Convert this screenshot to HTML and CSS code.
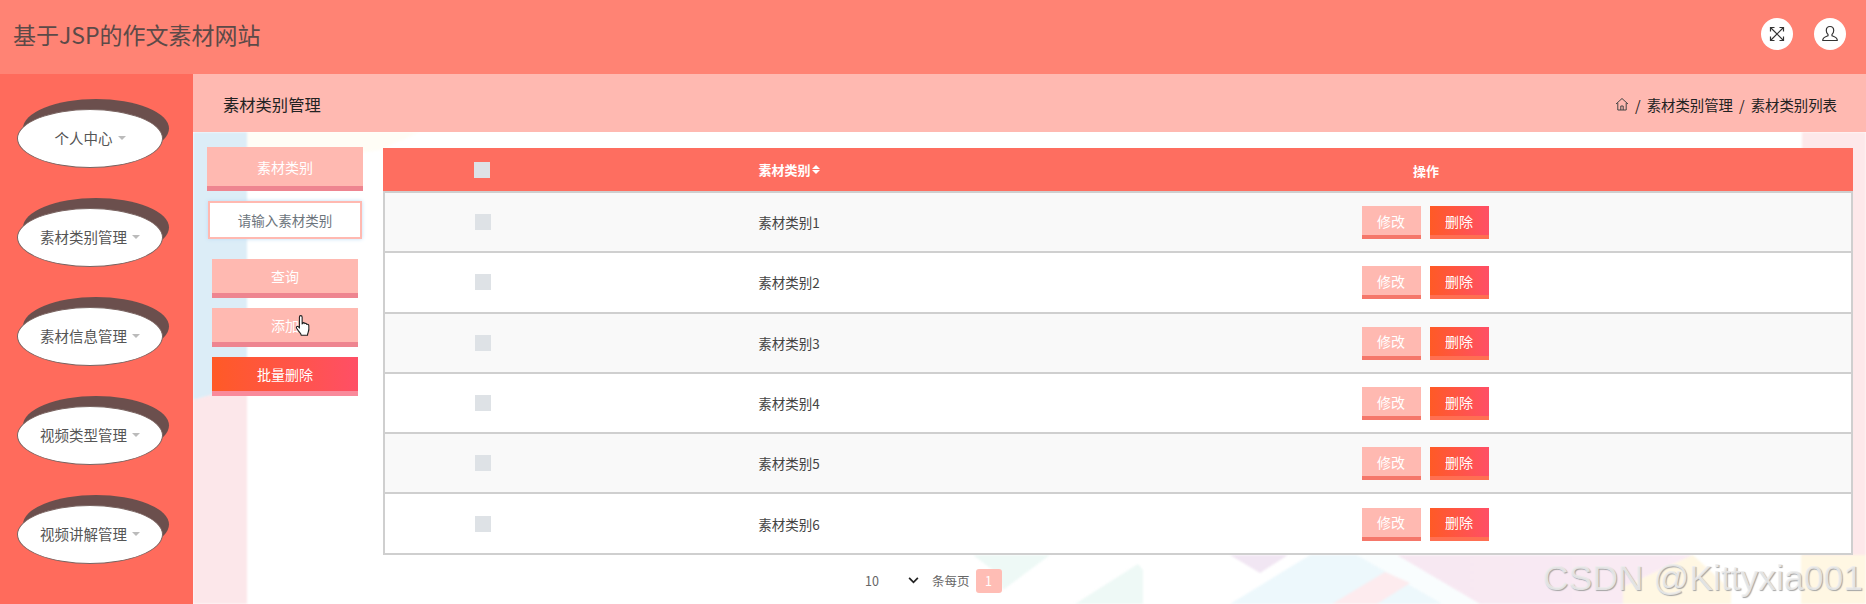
FILE: index.html
```html
<!DOCTYPE html>
<html lang="zh-CN">
<head>
    <meta charset="UTF-8">
    <title>基于JSP的作文素材网站</title>
    <link rel="stylesheet" href="styles.css">
</head>
<body>
    <header class="topbar">
        <div class="site-title">基于JSP的作文素材网站</div>
        <div class="top-icons">
            <span class="round-icon">
                <svg viewBox="0 0 18 18" width="18" height="18" fill="none" stroke="#333" stroke-width="1.2">
                    <path d="M3 3l12 12M15 3L3 15"/>
                    <path d="M2.500 6.500v-4h4M11.500 2.500h4v4M15.500 11.500v4h-4M6.500 15.500h-4v-4"/>
                </svg>
            </span>
            <span class="round-icon">
                <svg viewBox="0 0 18 18" width="18" height="18" fill="none" stroke="#333" stroke-width="1.2">
                    <path d="M9 1.500c-2.400 0-3.700 1.800-3.700 4 0 1.700.7 3 1.700 3.900v1.400c-2 .8-5.200 1.800-5.200 4v.7h14.400v-.7c0-2.200-3.200-3.200-5.200-4V9.400c1-.9 1.700-2.200 1.700-3.900 0-2.200-1.300-4-3.700-4z"/>
                </svg>
            </span>
        </div>
    </header>

    <div class="main">
        <nav class="sidebar">
            <div class="menu-item"><span>个人中心</span><i class="caret"></i></div>
            <div class="menu-item"><span>素材类别管理</span><i class="caret"></i></div>
            <div class="menu-item"><span>素材信息管理</span><i class="caret"></i></div>
            <div class="menu-item"><span>视频类型管理</span><i class="caret"></i></div>
            <div class="menu-item"><span>视频讲解管理</span><i class="caret"></i></div>
        </nav>

        <div class="content">
            <div class="crumb-bar">
                <div class="crumb-title">素材类别管理</div>
                <div class="crumbs">
                    <svg viewBox="0 0 14 14" width="14" height="14" fill="none" stroke="#444" stroke-width="1">
                        <path d="M1 7l6-5.500L13 7M2.800 6v7h8.400V6M5.800 13V9h2.400v4"/>
                    </svg>
                    <span class="sep">/</span>
                    <span>素材类别管理</span>
                    <span class="sep">/</span>
                    <span>素材类别列表</span>
                </div>
            </div>

            <div class="page">
                <!-- page wallpaper, coordinates are window pixels -->
                <svg class="wallpaper" viewBox="193 132 1673 472" width="1673" height="472">
                    <defs>
                        <linearGradient id="lilacFade" x1="0" y1="0" x2="1" y2="0">
                            <stop offset="0" stop-color="#f7e8f2"/>
                            <stop offset="1" stop-color="#faebf4"/>
                        </linearGradient>
                    </defs>
                    <polygon points="247,132 420,132 380,150 247,170" fill="#fffdf6"/>
                    <polygon points="193,132 247,132 247,385 193,400" fill="#dcedf7"/>
                    <polygon points="193,400 247,385 247,604 193,604" fill="#fce7ea"/>
                    <polygon points="1802,132 1866,132 1866,556 1802,556" fill="#fde8ea"/>
                    <polygon points="973,555 1050,555 1003,590 998,574" fill="#eef9f6"/>
                    <polygon points="1138,564 1143,570 1143,604 1075,604" fill="#eef9f6"/>
                    <polygon points="1230,555 1288,555 1260,573" fill="#f1e6f3"/>
                    <polygon points="1310,555 1357,555 1443,604 1230,604" fill="#edf8fc"/>
                    <polygon points="1357,555 1397,555 1480,604 1443,604" fill="#f9fdfe"/>
                    <polygon points="1385,572 1410,583 1377,604 1332,604" fill="#fdebee"/>
                    <polygon points="1397,555 1693,555 1623,587 1623,604 1480,604" fill="url(#lilacFade)"/>
                    <polygon points="1693,555 1731,590 1731,604 1623,604 1623,587" fill="#fff7e3"/>
                    <polygon points="1801,555 1866,555 1866,604 1801,604" fill="#fff7e3"/>
                </svg>

                <div class="filters">
                    <div class="filter-label">素材类别</div>
                    <div class="filter-input">请输入素材类别</div>
                    <div class="btn btn-soft">查询</div>
                    <div class="btn btn-soft">添加</div>
                    <div class="btn btn-hot">批量删除</div>
                </div>

                <div class="list">
                    <div class="table">
                        <div class="row row-head">
                            <div class="cell-check"><i class="check"></i></div>
                            <div class="cell-name">素材类别<span class="sort"></span></div>
                            <div class="cell-ops">操作</div>
                        </div>
                        <div class="row row-odd">
                            <div class="cell-check"><i class="check"></i></div>
                            <div class="cell-name">素材类别1</div>
                            <div class="cell-ops"><span class="act act-edit">修改</span><span class="act act-del">删除</span></div>
                        </div>
                        <div class="row">
                            <div class="cell-check"><i class="check"></i></div>
                            <div class="cell-name">素材类别2</div>
                            <div class="cell-ops"><span class="act act-edit">修改</span><span class="act act-del">删除</span></div>
                        </div>
                        <div class="row row-odd">
                            <div class="cell-check"><i class="check"></i></div>
                            <div class="cell-name">素材类别3</div>
                            <div class="cell-ops"><span class="act act-edit">修改</span><span class="act act-del">删除</span></div>
                        </div>
                        <div class="row">
                            <div class="cell-check"><i class="check"></i></div>
                            <div class="cell-name">素材类别4</div>
                            <div class="cell-ops"><span class="act act-edit">修改</span><span class="act act-del">删除</span></div>
                        </div>
                        <div class="row row-odd">
                            <div class="cell-check"><i class="check"></i></div>
                            <div class="cell-name">素材类别5</div>
                            <div class="cell-ops"><span class="act act-edit">修改</span><span class="act act-del">删除</span></div>
                        </div>
                        <div class="row">
                            <div class="cell-check"><i class="check"></i></div>
                            <div class="cell-name">素材类别6</div>
                            <div class="cell-ops"><span class="act act-edit">修改</span><span class="act act-del">删除</span></div>
                        </div>
                    </div>
                    <div class="pager">
                        <span class="page-size">10
                            <svg viewBox="0 0 12 8" width="11" height="7" fill="none" stroke="#222" stroke-width="2"><path d="M1 1l5 5 5-5"/></svg>
                        </span>
                        <span class="per-page">条每页</span>
                        <span class="page-no">1</span>
                    </div>
                </div>

                <div class="watermark">CSDN @Kittyxia001</div>
                <svg class="cursor" viewBox="0 0 16 22" width="18" height="24">
                    <path d="M5 1.500c.8 0 1.300.6 1.300 1.400v6l.7-.2V8c.9-.3 1.600 0 1.800.7.900-.3 1.600 0 1.800.8.900-.2 1.700.2 1.800 1.100.2 2 .2 4.500-.6 6.400-.4 1-.6 1.500-.6 2.500H5.500c-.3-1.500-1.500-2.500-2.600-4L1.200 13c-.6-1 .5-2.200 1.500-1.400l1.100 1V2.900c0-.8.500-1.400 1.200-1.400z" fill="#fff" stroke="#222" stroke-width="1"/>
                </svg>
            </div>
        </div>
    </div>
</body>
</html>
```

FILE: styles.css
```css
* { box-sizing: border-box; }

html, body {
    margin: 0;
    height: 100%;
    overflow: hidden;
}

body {
    font-family: "Noto Sans CJK SC", "Open Sans", sans-serif;
    font-size: 13px;
    color: #444;
    background: #fff;
}

.topbar {
    height: 74px;
    background: #ff8374;
    display: flex;
    align-items: center;
    justify-content: space-between;
    padding: 0 20px 6px 13px;
}
.site-title {
    font-size: 23px;
    color: #5c4a48;
}
.top-icons {
    display: flex;
    gap: 21px;
}
.round-icon {
    width: 32px;
    height: 32px;
    border-radius: 50%;
    background: #fff;
    display: flex;
    align-items: center;
    justify-content: center;
}

.main {
    display: flex;
    height: 530px;
}

.sidebar {
    width: 193px;
    background: #ff6b5c;
    padding-top: 35px;
    display: flex;
    flex-direction: column;
    gap: 40px;
    flex-shrink: 0;
}
.menu-item {
    width: 146px;
    height: 59px;
    margin-left: 17px;
    padding-bottom: 2px;
    border-radius: 50%;
    background: #fff;
    border: 1px solid #7a6562;
    box-shadow: 6px -10px 0 0 #6b4f4d;
    display: flex;
    align-items: center;
    justify-content: center;
    gap: 5px;
    color: #555;
    font-size: 14.500px;
}
.caret {
    width: 0;
    height: 0;
    border-left: 4px solid transparent;
    border-right: 4px solid transparent;
    border-top: 4px solid #bbb;
}

.content {
    flex: 1;
    display: flex;
    flex-direction: column;
}
.crumb-bar {
    height: 58px;
    background: #ffb9b1;
    display: flex;
    align-items: center;
    justify-content: space-between;
    padding: 2px 29px 0 30px;
    color: #222;
}
.crumb-title { font-size: 16.300px; }
.crumbs {
    display: flex;
    align-items: center;
    gap: 5px;
    font-size: 14.400px;
}
.sep { margin: 0 1px; }

.page {
    position: relative;
    flex: 1;
    display: flex;
    padding: 15px 13px 0 14px;
    overflow: hidden;
}
.wallpaper {
    position: absolute;
    left: 0;
    top: 0;
    filter: blur(1px);
}

.filters {
    position: relative;
    width: 156px;
    margin-right: 20px;
    flex-shrink: 0;
    display: flex;
    flex-direction: column;
    align-items: center;
}
.filter-label {
    width: 156px;
    height: 44px;
    background: #ffb9b1;
    border-bottom: 5px solid #ee8590;
    color: #fff;
    font-size: 14px;
    display: flex;
    align-items: center;
    justify-content: center;
}
.filter-input {
    width: 154px;
    height: 38px;
    margin-top: 10px;
    background: #fff;
    border: 2px solid #ffb9b1;
    box-shadow: 0 0 4px #bcdcf5;
    color: #6c757d;
    font-size: 13.500px;
    display: flex;
    align-items: center;
    justify-content: center;
}
.btn {
    width: 146px;
    height: 39px;
    margin-bottom: 10px;
    color: #fff;
    font-size: 14px;
    display: flex;
    align-items: center;
    justify-content: center;
    border-bottom: 5px solid #ee8590;
}
.filter-input + .btn { margin-top: 20px; }
.btn-soft { background: #ffb9b1; }
.btn-hot {
    background: linear-gradient(90deg, #ff5a26, #ff4f66);
    border-bottom-color: #f98a9b;
}

.list {
    position: relative;
    flex: 1;
    min-width: 0;
    padding-top: 1px;
}
.table {
    border: 2px solid #cfcfcf;
    border-top: 0;
    border-bottom: 0;
    background: #fff;
}
.row {
    display: grid;
    grid-template-columns: 196px 416px 1fr;
    align-items: center;
    justify-items: center;
    height: 60.300px;
    border-bottom: 2px solid #cfcfcf;
    color: #444;
    font-size: 13.500px;
}
.row-odd { background: #f9f9f9; }
.row-head {
    height: 45px;
    margin: 0 -2px;
    grid-template-columns: 198px 416px 1fr;
    background: #fe6e60;
    color: #fff;
    font-weight: bold;
    font-size: 13px;
}
.cell-check {
    display: flex;
    justify-content: center;
}
.cell-name {
    display: flex;
    align-items: center;
}
.sort {
    display: inline-block;
    width: 8px;
    margin-left: 1px;
}
.sort::before,
.sort::after {
    content: "";
    display: block;
    width: 0;
    height: 0;
    border-left: 4px solid transparent;
    border-right: 4px solid transparent;
}
.sort::before {
    border-bottom: 4px solid #fff;
    margin-bottom: 1px;
}
.sort::after { border-top: 4px solid #fff; }
.cell-ops {
    display: flex;
    justify-content: center;
    gap: 9px;
    padding: 1px 0 0 2px;
}
.check {
    display: block;
    width: 16px;
    height: 16px;
    background: #dee2e6;
}
.act {
    width: 59px;
    height: 33px;
    color: #fff;
    font-size: 14px;
    font-weight: normal;
    display: flex;
    align-items: center;
    justify-content: center;
    border-bottom: 4px solid;
}
.act-edit {
    background: #ffb9b1;
    border-bottom-color: #f5776a;
}
.act-del {
    background: linear-gradient(90deg, #ff5a26, #ff4f66);
    border-bottom-color: #ff6f52;
}

.pager {
    display: flex;
    align-items: center;
    height: 24px;
    margin-top: 14px;
    padding-left: 482px;
    color: #666;
    font-size: 12.500px;
}
.page-size {
    width: 62px;
    display: flex;
    align-items: center;
    justify-content: space-between;
    padding-right: 8px;
    margin-right: 5px;
}
.per-page { margin-right: 6px; }
.page-no {
    width: 26px;
    height: 24px;
    border-radius: 3px;
    background: #ffbdb5;
    color: #fff;
    display: flex;
    align-items: center;
    justify-content: center;
}

.watermark {
    position: absolute;
    right: 3px;
    bottom: 6px;
    font-family: "Liberation Sans", sans-serif;
    font-size: 35.500px;
    line-height: 40px;
    color: rgba(238, 238, 238, 0.85);
    text-shadow: 1px 1px 1px #a5a5a5;
    white-space: nowrap;
}
.cursor {
    position: absolute;
    left: 102px;
    top: 182px;
}
```
